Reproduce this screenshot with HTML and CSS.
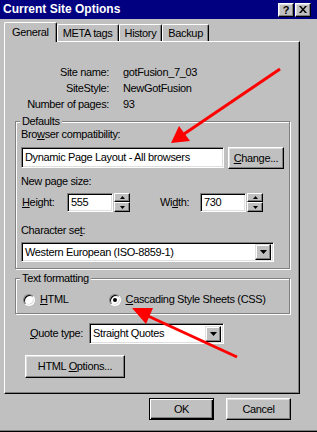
FILE: index.html
```html
<!DOCTYPE html>
<html lang="en">
<head>
  <meta charset="utf-8"/>
  <link rel="stylesheet" href="styles.css">
  <title>Current Site Options</title>
</head>
<body>
  <div class="window">
    <div class="titlebar">
      <span class="title">Current Site Options</span>
      <div class="title-buttons">
        <span class="tbtn">?</span>
        <span class="tbtn">
          <svg width="8" height="7" viewBox="0 0 8 7"><path d="M0 0h2l2 2.5 2-2.5h2l-3 3.5 3 3.5h-2l-2-2.5-2 2.5h-2l3-3.5z" fill="#000"/></svg>
        </span>
      </div>
    </div>

    <div class="client">
      <div class="tabs">
        <div class="tab active">General</div>
        <div class="tab">META tags</div>
        <div class="tab">History</div>
        <div class="tab">Backup</div>
      </div>

      <div class="panel">
        <div class="info">
          <span class="info-label">Site name:</span><span>gotFusion_7_03</span>
          <span class="info-label">SiteStyle:</span><span>NewGotFusion</span>
          <span class="info-label">Number of pages:</span><span>93</span>
        </div>

        <fieldset class="group defaults">
          <legend>Defaults</legend>
          <div class="field-label">Bro<u>w</u>ser compatibility:</div>
          <div class="row compat-row">
            <div class="edit compat">Dynamic Page Layout - All browsers</div>
            <button class="btn change"><u>C</u>hange...</button>
          </div>
          <div class="field-label size-label">New page size:</div>
          <div class="row size-row">
            <span class="size-name"><u>H</u>eight:</span>
            <div class="edit spin-edit">555</div>
            <div class="spin">
              <span class="spin-btn"><svg width="5" height="3"><path d="M2.5 0L5 3H0z"/></svg></span>
              <span class="spin-btn"><svg width="5" height="3"><path d="M0 0h5L2.5 3z"/></svg></span>
            </div>
            <span class="size-name width-name">Wi<u>d</u>th:</span>
            <div class="edit spin-edit">730</div>
            <div class="spin">
              <span class="spin-btn"><svg width="5" height="3"><path d="M2.5 0L5 3H0z"/></svg></span>
              <span class="spin-btn"><svg width="5" height="3"><path d="M0 0h5L2.5 3z"/></svg></span>
            </div>
          </div>
          <div class="field-label charset-label">Character se<u>t</u>:</div>
          <div class="edit combo charset">
            <span class="combo-text">Western European (ISO-8859-1)</span>
            <span class="combo-btn"><svg width="7" height="4"><path d="M0 0h7L3.5 4z"/></svg></span>
          </div>
        </fieldset>

        <fieldset class="group formatting">
          <legend>Text formatting</legend>
          <div class="radios">
            <span class="radio-option"><span class="radio"></span><span><u>H</u>TML</span></span>
            <span class="radio-option css-option"><span class="radio checked"></span><span><u>C</u>ascading Style Sheets (CSS)</span></span>
          </div>
        </fieldset>

        <div class="quote-row">
          <span class="quote-label"><u>Q</u>uote type:</span>
          <div class="edit combo quote">
            <span class="combo-text">Straight Quotes</span>
            <span class="combo-btn"><svg width="7" height="4"><path d="M0 0h7L3.5 4z"/></svg></span>
          </div>
        </div>

        <button class="btn html-options">HTML <u>O</u>ptions...</button>
      </div>

      <div class="dialog-buttons">
        <button class="btn default">OK</button>
        <button class="btn">Cancel</button>
      </div>
    </div>

    <!-- red annotation arrows drawn over the dialog -->
    <svg class="annotations" width="317" height="432" viewBox="0 0 317 432">
      <line x1="280" y1="69" x2="184" y2="134" stroke="#f00" stroke-width="3"/>
      <polygon points="171,143 179,126 190,141" fill="#f00"/>
      <line x1="237" y1="357" x2="148" y2="316" stroke="#f00" stroke-width="3"/>
      <polygon points="132,308 153,308 146,324" fill="#f00"/>
    </svg>
  </div>
</body>
</html>
```

FILE: styles.css
```css
* {
  box-sizing: border-box;
}

body {
  margin: 0;
  background: #c0c0c0;
  font-family: "Liberation Sans", Arial, sans-serif;
  font-size: 11px;
  line-height: 13px;
  letter-spacing: -0.35px; /* the dialog font is a bit narrower than Arial */
  color: #000;
}

.window {
  position: relative; /* for the annotation overlay */
  width: 317px;
  height: 432px;
  background: #c0c0c0;
  border-bottom: 1px solid #000;
  box-shadow: inset 0 -1px #808080;
}

.titlebar {
  height: 19px;
  background: #000080;
  color: #fff;
  display: flex;
  align-items: center;
  justify-content: space-between;
  padding: 0 6px 0 3px;
}

.title {
  font-weight: bold;
  font-size: 12px;
  letter-spacing: 0;
}

.title-buttons {
  display: flex;
  gap: 1px;
}

.tbtn {
  width: 16px;
  height: 14px;
  background: #c0c0c0;
  color: #000;
  font-weight: bold;
  font-size: 11px;
  line-height: 12px;
  display: flex;
  align-items: center;
  justify-content: center;
  border: 1px solid;
  border-color: #fff #000 #000 #fff;
  box-shadow: inset -1px -1px #808080, inset 1px 1px #dfdfdf;
}

.client {
  padding: 3px 0 0 4px;
}

/* tabs */
.tabs {
  display: flex;
  align-items: flex-end;
  height: 19px;
}

.tab {
  height: 17px;
  padding: 0 5px;
  line-height: 16px;
  border: 1px solid #fff;
  border-bottom: 0;
  border-right-color: #000;
  border-radius: 2px 2px 0 0;
  box-shadow: inset -1px 0 #808080;
  background: #c0c0c0;
}

.tab.active {
  height: 20px;
  line-height: 19px;
  padding: 0 7px;
  margin-bottom: -1px; /* covers the panel's top edge */
  position: relative;
  z-index: 1;
}

.panel {
  width: 296px;
  height: 353px;
  border: 1px solid;
  border-color: #fff #000 #000 #fff;
  box-shadow: inset -1px -1px #808080;
  padding-top: 22px;
}

.info {
  display: grid;
  grid-template-columns: 104px auto;
  column-gap: 14px;
  line-height: 16px;
}

.info-label {
  text-align: right;
}

/* group boxes */
.group {
  margin: 3px 0 0 10px;
  width: 275px;
  min-width: 0;
  border: 1px solid #808080;
  box-shadow: inset 1px 1px #fff, 1px 1px #fff;
  padding: 0 5px 6px 5px;
}

.group legend {
  margin-left: -1px;
  padding: 0 2px;
  line-height: 13px;
  background: #c0c0c0;
}

.row {
  display: flex;
  align-items: center;
}

.edit {
  background: #fff;
  border: 1px solid;
  border-color: #808080 #fff #fff #808080;
  box-shadow: inset 1px 1px #000, inset -1px -1px #dfdfdf;
  padding-left: 3px;
  white-space: nowrap;
  overflow: hidden;
}

.compat-row {
  margin-top: 6px;
  align-items: flex-start;
}

.compat {
  width: 203px;
  height: 21px;
  line-height: 19px;
}

.btn {
  font: inherit;
  letter-spacing: inherit;
  color: #000;
  background: #c0c0c0;
  padding: 0;
  border: 1px solid;
  border-color: #fff #000 #000 #fff;
  box-shadow: inset -1px -1px #808080, inset 1px 1px #dfdfdf;
  height: 22px;
  width: 65px;
}

.btn.default {
  border-color: #000;
  box-shadow: inset 1px 1px #fff, inset -1px -1px #000, inset -2px -2px #808080;
}

.change {
  width: 56px;
  margin-left: 4px;
}

.size-label {
  margin-top: 6px;
}

.size-row {
  margin-top: 5px;
  height: 19px;
}

.size-name {
  width: 46px;
  padding-left: 1px;
}

.width-name {
  margin-left: 29px;
  width: 41px;
}

.spin-edit {
  width: 46px;
  height: 19px;
  line-height: 17px;
}

.spin {
  display: flex;
  flex-direction: column;
  margin-left: 1px;
}

.spin-btn {
  width: 16px;
  height: 9px;
  display: flex;
  align-items: center;
  justify-content: center;
  border: 1px solid;
  border-color: #fff #000 #000 #fff;
  box-shadow: inset -1px -1px #808080;
  background: #c0c0c0;
}

.spin-btn + .spin-btn {
  height: 10px;
}

.charset-label {
  margin-top: 12px;
}

.combo {
  display: flex;
  align-items: center;
  justify-content: space-between;
  height: 20px;
  padding: 2px 2px 2px 3px;
}

.charset {
  margin-top: 5px;
  width: 253px;
}

.combo-btn {
  width: 16px;
  height: 16px;
  display: flex;
  align-items: center;
  justify-content: center;
  border: 1px solid;
  border-color: #dfdfdf #000 #000 #dfdfdf;
  box-shadow: inset -1px -1px #808080, inset 1px 1px #fff;
  background: #c0c0c0;
}

/* text formatting */
.radios {
  display: flex;
  align-items: center;
  margin-top: 8px;
  height: 13px;
}

.radio-option {
  display: flex;
  align-items: center;
  gap: 5px;
  margin-left: 2px;
  white-space: nowrap;
}

.css-option {
  margin-left: 40px;
}

.radio {
  width: 12px;
  height: 12px;
  border-radius: 50%;
  background: #fff;
  border: 1px solid;
  border-color: #808080 #fff #fff #808080;
  box-shadow: inset 1px 1px #000, inset -1px -1px #dfdfdf;
  display: flex;
  align-items: center;
  justify-content: center;
}

.radio.checked::after {
  content: "";
  width: 4px;
  height: 4px;
  border-radius: 50%;
  background: #000;
}

.formatting {
  padding-bottom: 7px;
}

.quote-row {
  display: flex;
  align-items: center;
  margin: 9px 0 0 25px;
}

.quote-label {
  width: 59px;
}

.quote {
  width: 135px;
  height: 21px;
}

.html-options {
  width: 100px;
  height: 23px;
  margin: 11px 0 0 20px;
}

.dialog-buttons {
  display: flex;
  justify-content: flex-end;
  gap: 12px;
  margin-top: 4px;
  padding-right: 26px;
}

.annotations {
  position: absolute;
  top: 0;
  left: 0;
  pointer-events: none;
}
```
